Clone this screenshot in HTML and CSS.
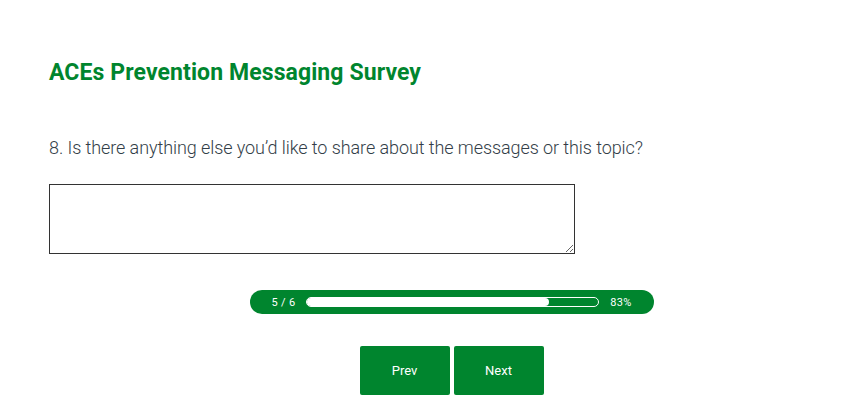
FILE: index.html
```html
<!DOCTYPE html>
<html lang="en">
  <head>
    <meta charset="UTF-8" />
    <title>ACEs Prevention Messaging Survey</title>
    <link rel="stylesheet" href="styles.css">
  </head>
  <body>
    <div class="survey">
      <h1 class="survey-title">ACEs Prevention Messaging Survey</h1>

      <div class="question">
        <p class="question-text">8. Is there anything else you’d like to share about the messages or this topic?</p>
        <textarea class="answer" name="q8"></textarea>
      </div>

      <div class="progress">
        <span class="progress-count">5 / 6</span>
        <div class="progress-track">
          <div class="progress-fill" style="width: 83%"></div>
        </div>
        <span class="progress-pct">83%</span>
      </div>

      <div class="nav">
        <button type="button" class="nav-btn">Prev</button>
        <button type="button" class="nav-btn">Next</button>
      </div>
    </div>
  </body>
</html>
```

FILE: styles.css
```css
/* Global */
body {
  margin: 0;
  background: #fff;
  font-family: Roboto, "Liberation Sans", sans-serif;
}

.survey {
  padding: 60px 0 0 49px;
}

/* Title */
.survey-title {
  margin: 0;
  color: #00852e;
  font-size: 23px;
  font-weight: 700;
  line-height: 26px;
  letter-spacing: 0.1px;
}

/* Question */
.question {
  margin-top: 50px;
}

.question-text {
  margin: 0 0 24px;
  color: #333e48;
  font-size: 18px;
  font-weight: 300;
  line-height: 24px;
  letter-spacing: -0.08px;
}

.answer {
  display: block;
  box-sizing: border-box;
  width: 526px;
  height: 70px;
  margin: 0;
  border: 1px solid #333;
  border-radius: 0;
  resize: vertical;
}

/* Progress bar */
.progress {
  display: flex;
  align-items: center;
  box-sizing: border-box;
  width: 404px;
  height: 24px;
  margin: 36px auto 0;
  padding: 0 22px;
  background: #00852e;
  border-radius: 12px;
  color: #fff;
  font-size: 11px;
  letter-spacing: 0.3px;
}

.progress-track {
  flex: 1;
  height: 10px;
  margin: 0 11px;
  box-sizing: border-box;
  border: 1px solid #fff;
  border-radius: 5px;
}

.progress-fill {
  height: 100%;
  background: #fff;
  border-radius: 4px;
}

/* Navigation */
.nav {
  display: flex;
  justify-content: center;
  gap: 4px;
  margin-top: 32px;
}

.nav-btn {
  width: 90px;
  height: 49px;
  background: #00852e;
  border: none;
  border-radius: 2px;
  color: #fff;
  font-family: Roboto, "Liberation Sans", sans-serif;
  font-size: 13px;
  cursor: pointer;
}
```
